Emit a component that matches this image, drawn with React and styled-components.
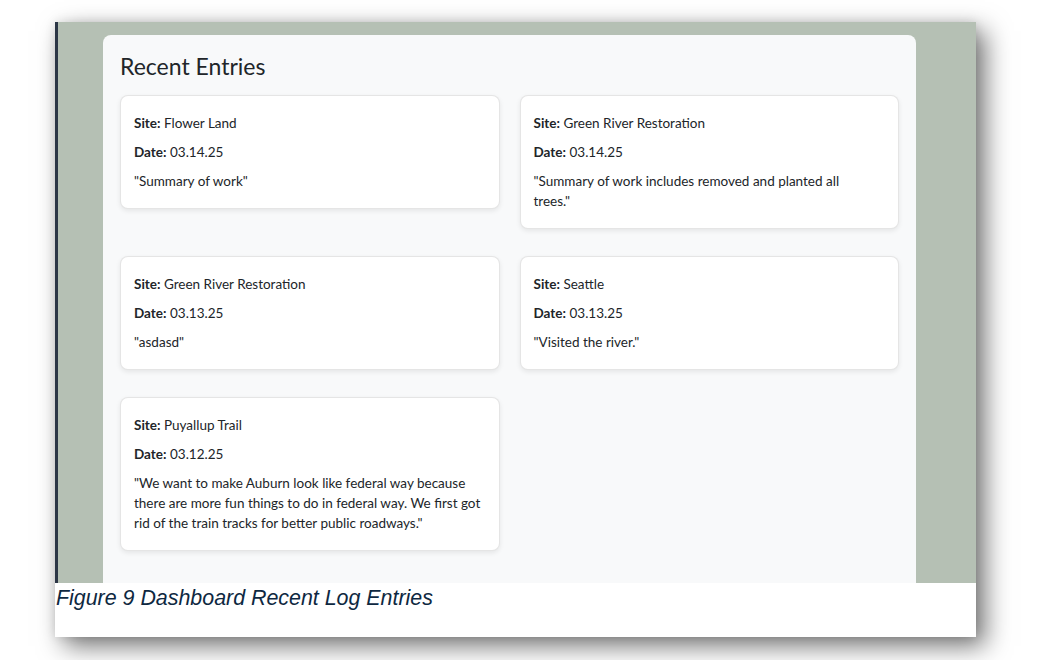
import React from "react";
import styled, { createGlobalStyle } from "styled-components";

const GlobalStyle = createGlobalStyle`
  html, body {
    margin: 0;
    padding: 0;
    background: #ffffff;
  }
  body {
    width: 1048px;
    height: 660px;
    overflow: hidden;
  }
`;

const Page = styled.div`
  padding: 22px 0 0 55px;
`;

const Figure = styled.figure`
  margin: 0;
  width: 921px;
  display: flex;
  flex-direction: column;
  background: #ffffff;
  box-shadow: 9px 9px 24px rgba(0, 0, 0, 0.55), 0 0 10px rgba(0, 0, 0, 0.1);
`;

const Shot = styled.div`
  height: 561px;
  box-sizing: border-box;
  border-left: 3px solid #2c3646;
  background: #b5c0b4;
  padding: 13px 60px 0 45px;
  overflow: hidden;
`;

const Panel = styled.section`
  background: #f8f9fa;
  border-radius: 8px;
  padding: 17px 17px 40px;
  font-family: Lato, "Open Sans", sans-serif;
  color: #212529;
`;

const Title = styled.h2`
  margin: 0 0 14px;
  font-size: 23px;
  line-height: 29px;
  font-weight: 400;
  color: #212529;
`;

const Grid = styled.div`
  display: grid;
  grid-template-columns: repeat(2, 1fr);
  column-gap: 20px;
  row-gap: 27px;
  align-items: start;
`;

const Card = styled.article`
  background: #ffffff;
  border: 1px solid rgba(0, 0, 0, 0.1);
  border-radius: 8px;
  box-shadow: 0 2px 5px rgba(0, 0, 0, 0.08);
  padding: 17px 13px;
`;

const Line = styled.p`
  margin: 0 0 9px;
  font-size: 13.5px;
  line-height: 20px;
  white-space: pre-line;
  &:last-child {
    margin-bottom: 0;
  }
`;

const Label = styled.strong`
  font-weight: 700;
`;

const Caption = styled.figcaption`
  width: 920px;
  height: 54px;
  box-sizing: border-box;
  padding: 3px 0 0 1px;
  background: #ffffff;
  font-family: "Liberation Sans", Arial, sans-serif;
  font-style: italic;
  font-size: 21.4px;
  line-height: 25px;
  color: #0e2841;
`;

const entries = [
  { site: "Flower Land", date: "03.14.25", text: "Summary of work" },
  {
    site: "Green River Restoration",
    date: "03.14.25",
    text: "Summary of work includes removed and planted all\ntrees.",
  },
  { site: "Green River Restoration", date: "03.13.25", text: "asdasd" },
  { site: "Seattle", date: "03.13.25", text: "Visited the river." },
  {
    site: "Puyallup Trail",
    date: "03.12.25",
    text: "We want to make Auburn look like federal way because there are more fun things to do in federal way. We first got rid of the train tracks for better public roadways.",
  },
];

export default function App() {
  return (
    <>
      <GlobalStyle />
      <Page>
        <Figure>
          <Shot>
            <Panel>
              <Title>Recent Entries</Title>
              <Grid>
                {entries.map((e, i) => (
                  <Card key={i}>
                    <Line>
                      <Label>Site:</Label> {e.site}
                    </Line>
                    <Line>
                      <Label>Date:</Label> {e.date}
                    </Line>
                    <Line>"{e.text}"</Line>
                  </Card>
                ))}
              </Grid>
            </Panel>
          </Shot>
          <Caption>Figure 9 Dashboard Recent Log Entries</Caption>
        </Figure>
      </Page>
    </>
  );
}
